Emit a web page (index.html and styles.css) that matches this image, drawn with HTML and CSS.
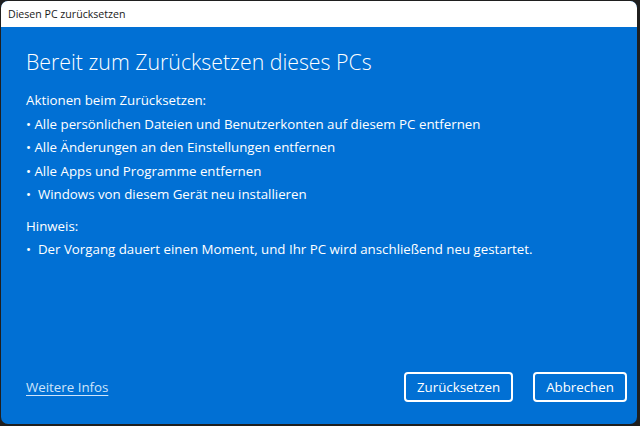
FILE: index.html
```html
<!DOCTYPE html>
<html lang="de">
<head>
<meta charset="utf-8">
<link rel="stylesheet" href="styles.css">
</head>
<body>
<div class="window">
  <div class="titlebar">Diesen PC zurücksetzen</div>
  <div class="content">
    <h1 class="heading">Bereit zum Zurücksetzen dieses PCs</h1>
    <p class="label">Aktionen beim Zurücksetzen:</p>
    <ul class="list">
      <li>• Alle persönlichen Dateien und Benutzerkonten auf diesem PC entfernen</li>
      <li>• Alle Änderungen an den Einstellungen entfernen</li>
      <li>• Alle Apps und Programme entfernen</li>
      <li>•&nbsp; Windows von diesem Gerät neu installieren</li>
    </ul>
    <p class="label note">Hinweis:</p>
    <ul class="list">
      <li>•&nbsp; Der Vorgang dauert einen Moment, und Ihr PC wird anschließend neu gestartet.</li>
    </ul>
    <div class="spacer"></div>
    <div class="footer">
      <a class="link" href="#">Weitere Infos</a>
      <div class="buttons">
        <button class="btn btn-reset">Zurücksetzen</button>
        <button class="btn btn-cancel">Abbrechen</button>
      </div>
    </div>
  </div>
</div>
</body>
</html>
```
FILE: styles.css
```css
* { box-sizing: border-box; }
html, body { margin: 0; padding: 0; }
body {
  width: 640px;
  height: 426px;
  background: #1f1f1f;
  padding: 1px 3px 2px 1px;
  font-family: "Open Sans", "Noto Sans", sans-serif;
  overflow: hidden;
}
.window {
  width: 636px;
  height: 423px;
  border-radius: 7px;
  overflow: hidden;
  display: flex;
  flex-direction: column;
  background: #0170d4;
}
.titlebar {
  height: 26px;
  background: #ffffff;
  color: #1a1a1a;
  font-size: 10.6px;
  padding: 6px 0 0 7px;
  flex: none;
}
.content {
  flex: 1;
  display: flex;
  flex-direction: column;
  padding: 20px 10px 22px 25px;
  color: #ffffff;
}
.heading {
  margin: 0 0 12px 0;
  font-weight: 300;
  font-size: 21.3px;
  line-height: 30px;
}
.label {
  margin: 0;
  font-size: 13.3px;
  line-height: 23.5px;
}
.note { margin-top: 8px; }
.list {
  list-style: none;
  margin: 0;
  padding: 0;
}
.list li {
  font-size: 13.3px;
  line-height: 23.5px;
}
.spacer { flex: 1; }
.footer {
  display: flex;
  align-items: center;
  justify-content: space-between;
}
.link {
  color: #cfe4fa;
  font-size: 13.3px;
  text-decoration: underline;
  text-underline-offset: 3px;
}
.buttons {
  display: flex;
  gap: 20px;
}
.btn {
  background: transparent;
  border: 2px solid #ffffff;
  border-radius: 4px;
  color: #ffffff;
  font-family: inherit;
  font-size: 13.3px;
  height: 30px;
  padding: 0 6px;
}
.btn-reset { width: 109px; }
.btn-cancel { width: 94px; }
```
